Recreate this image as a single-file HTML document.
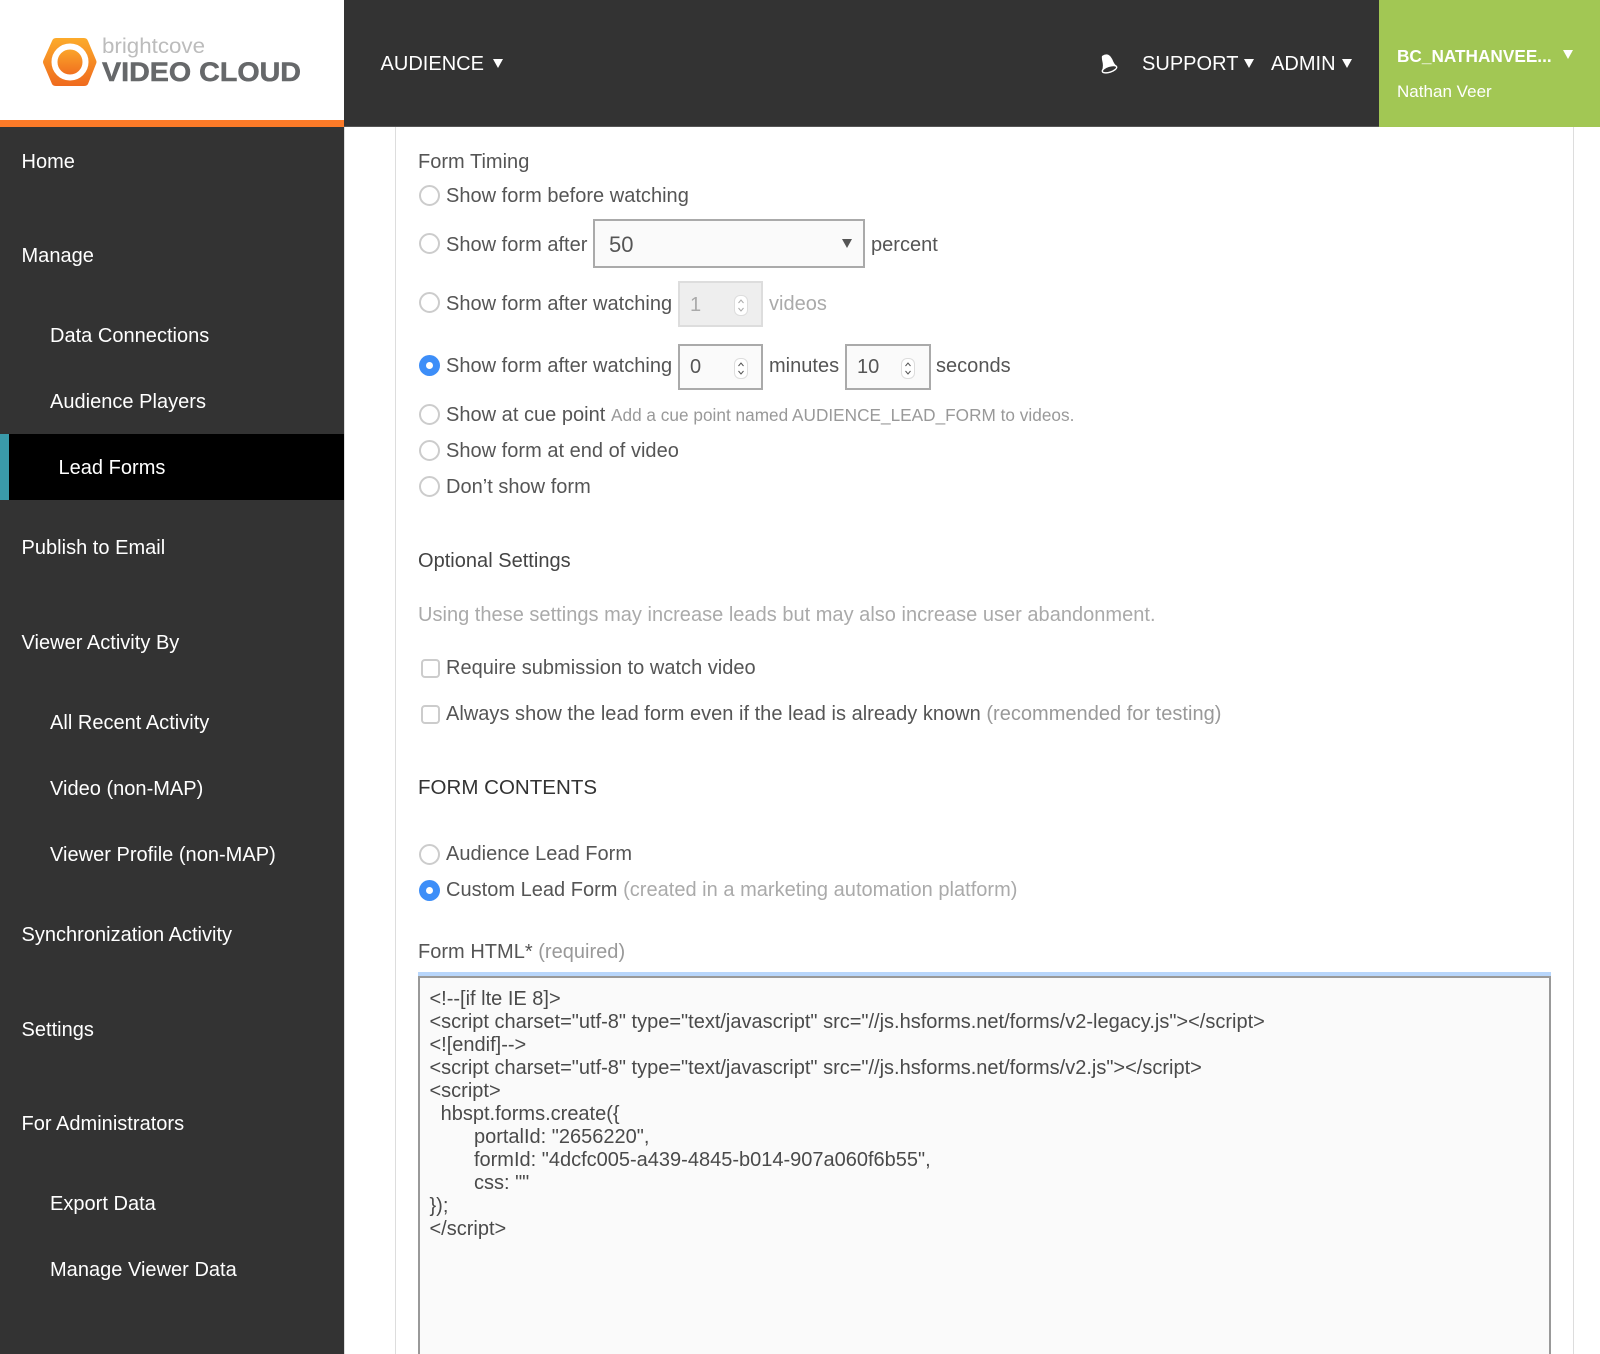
<!DOCTYPE html>
<html><head><meta charset="utf-8"><title>Lead Forms</title>
<style>
html,body{margin:0;padding:0;background:#fff}
body{width:1600px;height:1354px;position:relative;overflow:hidden;font-family:"Liberation Sans",sans-serif;font-size:20px;color:#555;filter:blur(.3px)}
.a,.t,.n,.s{position:absolute}
.t,.n,.s{line-height:24px;white-space:nowrap;letter-spacing:.02px}
.n{color:#fff}
.g{color:#aaa}
.r{position:absolute;left:418.5px;width:17px;height:17px;border:2px solid #ccc;border-radius:50%;background:#fff}
.r.on{width:21px;height:21px;border:0;background:#3d8ef8}
.r.on:after{content:"";position:absolute;left:7px;top:7px;width:7px;height:7px;background:#fff;border-radius:50%}
.c{position:absolute;left:420.5px;width:15px;height:15px;border:2px solid #ccc;border-radius:4px;background:#fff}
.i{position:absolute;box-sizing:border-box;width:86px;height:46px;border:2px solid #aaa;background:#fafafa}
.i.d{background:#eee;border-color:#ddd}
.sp{position:absolute;width:12px;height:19px;border:1px solid #ddd;border-radius:6px;background:#fff}
.tri{position:absolute;width:0;height:0;border-left:5px solid transparent;border-right:5px solid transparent;border-top:9px solid #fff}
</style></head><body>

<!-- sidebar -->
<div class="a" style="left:0;top:127px;width:344px;height:1227px;background:#333"></div>
<div class="a" style="left:344px;top:127px;width:1px;height:1227px;background:#ddd"></div>
<div class="a" style="left:0;top:434px;width:344px;height:66px;background:#000"></div>
<div class="a" style="left:0;top:434px;width:9px;height:66px;background:#3a9aaa"></div>
<span class="n" style="left:21.5px;top:150px">Home</span>
<span class="n" style="left:21.5px;top:244px">Manage</span>
<span class="n" style="left:50px;top:324px">Data Connections</span>
<span class="n" style="left:50px;top:390px">Audience Players</span>
<span class="n" style="left:58.5px;top:456px">Lead Forms</span>
<span class="n" style="left:21.5px;top:536px">Publish to Email</span>
<span class="n" style="left:21.5px;top:631px">Viewer Activity By</span>
<span class="n" style="left:50px;top:711px">All Recent Activity</span>
<span class="n" style="left:50px;top:777px">Video (non-MAP)</span>
<span class="n" style="left:50px;top:843px">Viewer Profile (non-MAP)</span>
<span class="n" style="left:21.5px;top:923px">Synchronization Activity</span>
<span class="n" style="left:21.5px;top:1018px">Settings</span>
<span class="n" style="left:21.5px;top:1112px">For Administrators</span>
<span class="n" style="left:50px;top:1192px">Export Data</span>
<span class="n" style="left:50px;top:1258px">Manage Viewer Data</span>

<!-- header -->
<div class="a" style="left:344px;top:0;width:1036px;height:127px;background:#333;border-bottom:1px solid #555;box-sizing:border-box"></div>
<div class="a" style="left:0;top:120px;width:344px;height:7px;background:#fb7a28"></div>
<svg class="a" style="left:0;top:0" width="344" height="120" viewBox="0 0 344 120">
<defs><linearGradient id="o" x1="0" y1="0" x2="0" y2="1"><stop offset="0" stop-color="#fcab2b"/><stop offset="1" stop-color="#ef6a1e"/></linearGradient></defs>
<path d="M52 41 Q53 38 56 38 L84 38 Q87 38 88 41 L96 60 Q97 62 96 64 L88 84 Q87 86 84 86 L56 86 Q53 86 52 84 L43.5 64 Q42.5 62 43.5 60 Z" fill="url(#o)"/>
<circle cx="70" cy="62" r="15.5" fill="url(#o)" stroke="#fff" stroke-width="6"/>
<text x="102" y="53" font-family="Liberation Sans" font-size="21" fill="#bcbcbc" textLength="103" lengthAdjust="spacingAndGlyphs">brightcove</text>
<text x="102" y="81" font-family="Liberation Sans" font-weight="bold" font-size="27" fill="#66686a" stroke="#66686a" stroke-width=".5" textLength="199" lengthAdjust="spacingAndGlyphs">VIDEO CLOUD</text>
</svg>
<span class="n" style="left:380.5px;top:52px">AUDIENCE</span>
<div class="tri" style="left:493px;top:59px"></div>
<svg class="a" style="left:1099px;top:53px" width="22" height="22" viewBox="0 0 22 22">
<path d="M3 3 Q8 -0.5 11.5 3.5 Q13.5 6 14.5 9 Q16 12 18 13 L16.5 15 L3 18 Q4.5 13 3.5 9 Q2.5 5 3 3 Z" fill="#fff"/>
<ellipse cx="10.5" cy="16.2" rx="7.5" ry="3" transform="rotate(-18 10.5 16.2)" fill="#333" stroke="#fff" stroke-width="1.4"/>
</svg>
<span class="n" style="left:1142px;top:52px">SUPPORT</span>
<div class="tri" style="left:1244px;top:59px"></div>
<span class="n" style="left:1271px;top:52px">ADMIN</span>
<div class="tri" style="left:1342px;top:59px"></div>
<div class="a" style="left:1379px;top:0;width:221px;height:127px;background:#a2c754"></div>
<span class="n" style="left:1397px;top:44px;font-size:17.2px;font-weight:bold">BC_NATHANVEE...</span>
<div class="tri" style="left:1563px;top:50px"></div>
<span class="n" style="left:1397px;top:80px;font-size:17px">Nathan Veer</span>

<!-- content frame -->
<div class="a" style="left:395px;top:127px;width:1px;height:1227px;background:#ddd"></div>
<div class="a" style="left:1573px;top:127px;width:1px;height:1227px;background:#ddd"></div>

<span class="t" style="left:418px;top:150px">Form Timing</span>

<div class="r" style="top:185px"></div>
<span class="t" style="left:446px;top:184px">Show form before watching</span>

<div class="r" style="top:233px"></div>
<span class="t" style="left:446px;top:232.5px">Show form after</span>
<div class="i" style="left:593px;top:219px;width:272px;height:49px"></div>
<span class="t" style="left:609px;top:233px;font-size:22px">50</span>
<div class="tri" style="left:842px;top:239px;border-top-color:#555"></div>
<span class="t" style="left:871px;top:232.5px">percent</span>

<div class="r" style="top:292px"></div>
<span class="t" style="left:446px;top:291.5px">Show form after watching</span>
<div class="i d" style="left:678px;top:281px;width:85px"></div>
<span class="t g" style="left:690px;top:293px">1</span>
<div class="sp" style="left:733.5px;top:295px"></div>
<svg class="a" style="left:733.5px;top:295px" width="14" height="21"><path d="M4.5 8 L7 5 L9.5 8 M4.5 13 L7 16 L9.5 13" fill="none" stroke="#aaa" stroke-width="1"/></svg>
<span class="t g" style="left:769px;top:291.5px">videos</span>

<div class="r on" style="top:355px"></div>
<span class="t" style="left:446px;top:353.5px">Show form after watching</span>
<div class="i" style="left:678px;top:343.5px;width:85px"></div>
<span class="t" style="left:690px;top:354.5px">0</span>
<div class="sp" style="left:733.5px;top:358px"></div>
<svg class="a" style="left:733.5px;top:358px" width="14" height="21"><path d="M4.5 8 L7 5 L9.5 8 M4.5 13 L7 16 L9.5 13" fill="none" stroke="#555" stroke-width="1"/></svg>
<span class="t" style="left:769px;top:353.5px">minutes</span>
<div class="i" style="left:845px;top:343.5px"></div>
<span class="t" style="left:857px;top:354.5px">10</span>
<div class="sp" style="left:900.5px;top:358px"></div>
<svg class="a" style="left:900.5px;top:358px" width="14" height="21"><path d="M4.5 8 L7 5 L9.5 8 M4.5 13 L7 16 L9.5 13" fill="none" stroke="#555" stroke-width="1"/></svg>
<span class="t" style="left:936px;top:353.5px">seconds</span>

<div class="r" style="top:404px"></div>
<span class="t" style="left:446px;top:402.5px">Show at cue point</span>
<span class="s" style="left:611px;top:402.5px;font-size:17.2px;color:#999">Add a cue point named AUDIENCE_LEAD_FORM to videos.</span>

<div class="r" style="top:440px"></div>
<span class="t" style="left:446px;top:438.5px">Show form at end of video</span>
<div class="r" style="top:476px"></div>
<span class="t" style="left:446px;top:474.5px">Don’t show form</span>

<span class="t" style="left:418px;top:548.5px;color:#444">Optional Settings</span>
<span class="t g" style="left:418px;top:603px">Using these settings may increase leads but may also increase user abandonment.</span>

<div class="c" style="top:659px"></div>
<span class="t" style="left:446px;top:656px">Require submission to watch video</span>
<div class="c" style="top:705px"></div>
<span class="t" style="left:446px;top:702px">Always show the lead form even if the lead is already known <span style="color:#999">(recommended for testing)</span></span>

<span class="t" style="left:418px;top:775.5px;font-size:20.5px;color:#333">FORM CONTENTS</span>

<div class="r" style="top:844px"></div>
<span class="t" style="left:446px;top:842px">Audience Lead Form</span>
<div class="r on" style="top:880px"></div>
<span class="t" style="left:446px;top:877.5px">Custom Lead Form <span class="g">(created in a marketing automation platform)</span></span>

<span class="t" style="left:418px;top:940px">Form HTML* <span style="color:#999">(required)</span></span>

<div class="a" style="left:418px;top:972px;width:1133px;height:5px;background:#b8d6fb"></div>
<div class="a" style="left:418px;top:976px;width:1133px;height:378px;box-sizing:border-box;border:2px solid #999;border-bottom:0;background:#fafafa"></div>
<pre class="a" style="left:429.5px;top:988px;margin:0;font:20px/23px 'Liberation Sans',sans-serif;color:#4a4a4a">&lt;!--[if lte IE 8]&gt;
&lt;script charset="utf-8" type="text/javascript" src="//js.hsforms.net/forms/v2-legacy.js"&gt;&lt;/script&gt;
&lt;![endif]--&gt;
&lt;script charset="utf-8" type="text/javascript" src="//js.hsforms.net/forms/v2.js"&gt;&lt;/script&gt;
&lt;script&gt;
  hbspt.forms.create({
        portalId: "2656220",
        formId: "4dcfc005-a439-4845-b014-907a060f6b55",
        css: ""
});
&lt;/script&gt;</pre>
</body></html>
